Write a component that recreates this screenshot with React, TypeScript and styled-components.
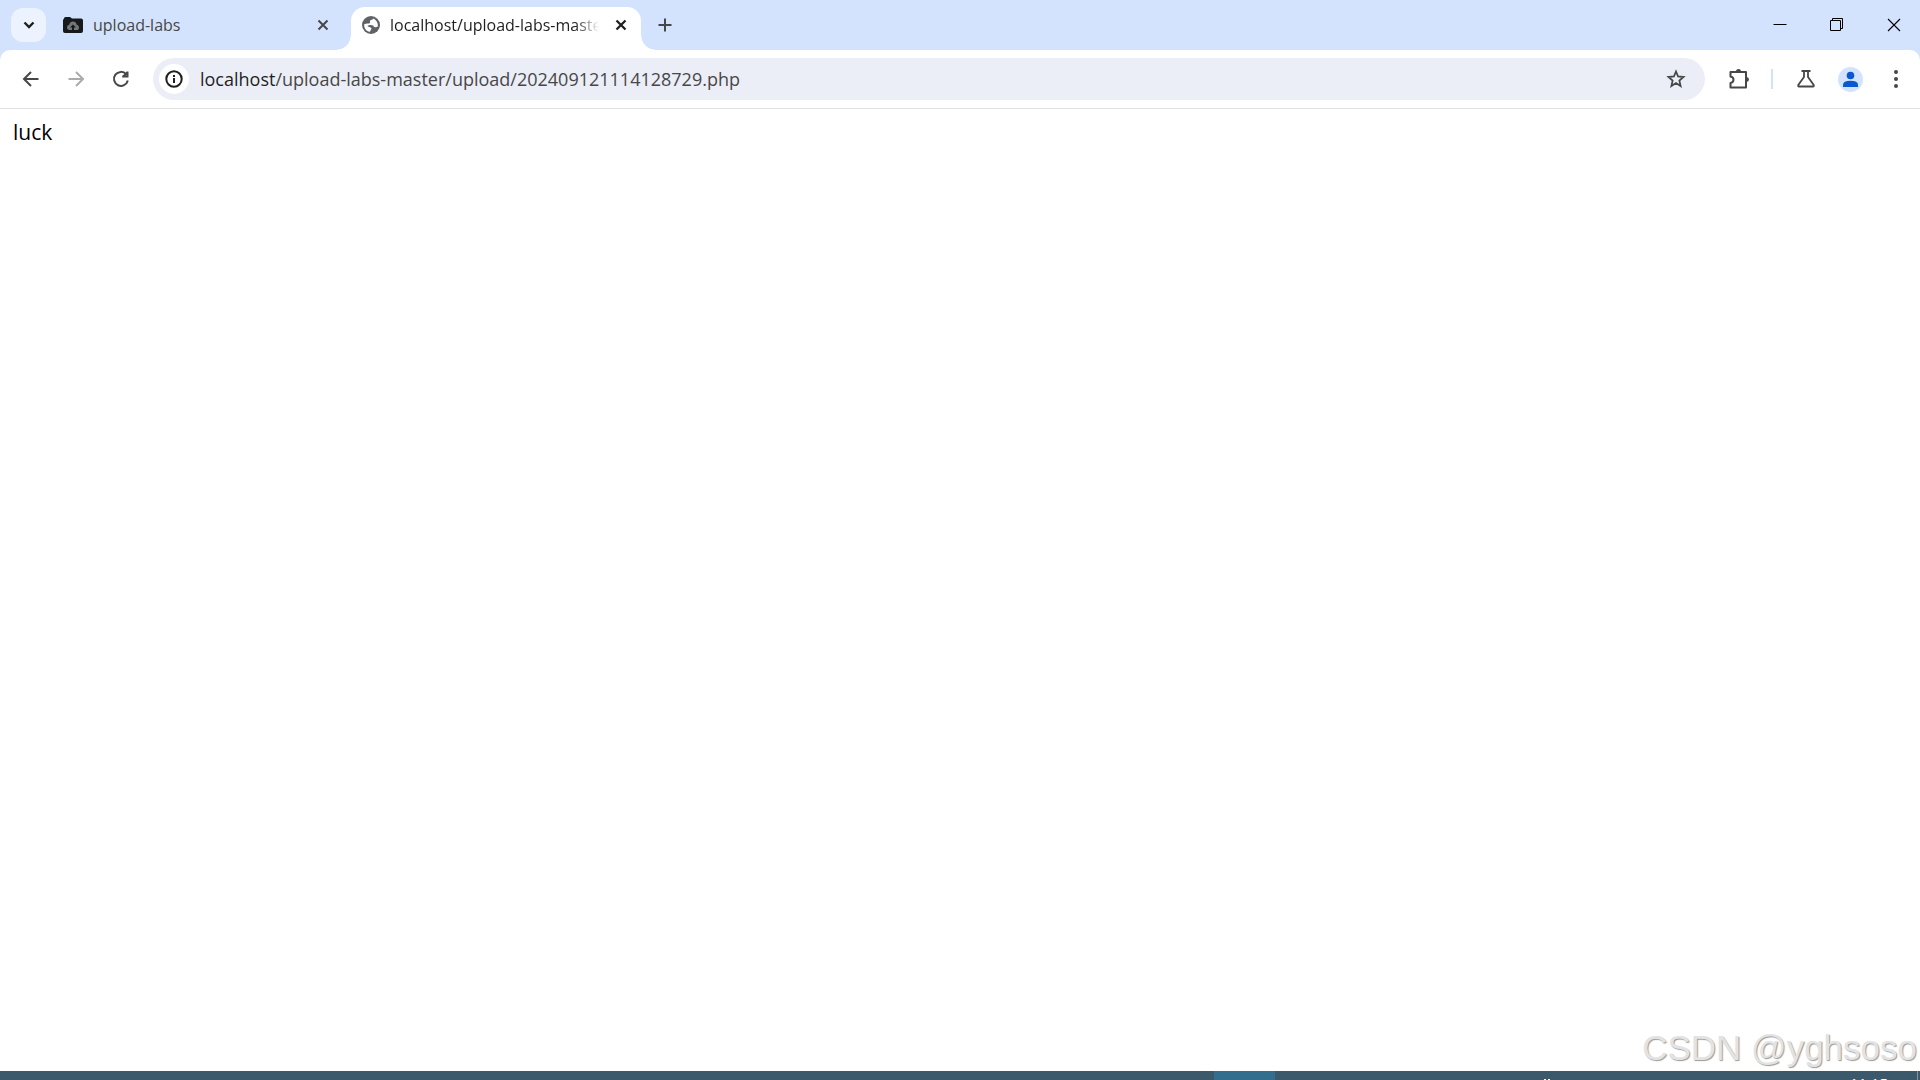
import React from "react";
import styled, { createGlobalStyle } from "styled-components";

const Global = createGlobalStyle`
  * { box-sizing: border-box; }
  body { margin: 0; background: #fff; font-family: "Open Sans", "Noto Sans CJK SC", sans-serif; }
`;

const Desktop = styled.div`
  display: flex;
  flex-direction: column;
  height: 100vh;
  overflow: hidden;
  position: relative;
`;

const TabStrip = styled.header`
  display: flex;
  align-items: stretch;
  height: 50px;
  padding-left: 11px;
  background: #d3e3fd;
`;

const PlainButton = styled.button`
  display: inline-flex;
  align-items: center;
  justify-content: center;
  flex: none;
  border: 0;
  padding: 0;
  margin: 0;
  background: transparent;
  color: #474747;
  svg { display: block; }
`;

const TabSearch = styled(PlainButton)`
  align-self: center;
  width: 35px;
  height: 34px;
  border-radius: 12px;
  background: #ecf3fe;
  color: #1f1f1f;
`;

const TabList = styled.div`
  display: flex;
  align-items: flex-end;
`;

const Tab = styled.div<{ $active?: boolean }>`
  position: relative;
  display: flex;
  align-items: center;
  gap: 10px;
  width: ${(p) => (p.$active ? 290 : 305)}px;
  height: 43px;
  padding: ${(p) => (p.$active ? "0 8px 8px 11px" : "0 16px 8px 17px")};
  border-radius: 14px 14px 0 0;
  background: ${(p) => (p.$active ? "#fff" : "transparent")};
  color: ${(p) => (p.$active ? "#1f1f1f" : "#474747")};
  &::before, &::after {
    content: "";
    display: ${(p) => (p.$active ? "block" : "none")};
    position: absolute;
    bottom: 0;
    width: 14px;
    height: 14px;
  }
  &::before { right: 100%; background: radial-gradient(circle at 0 0, transparent 13px, #fff 14px); }
  &::after { left: 100%; background: radial-gradient(circle at 100% 0, transparent 13px, #fff 14px); }
`;

const TabTitle = styled.span<{ $fade?: boolean }>`
  flex: 1;
  min-width: 0;
  overflow: hidden;
  white-space: nowrap;
  font-size: 16px;
  line-height: 20px;
  mask-image: ${(p) => (p.$fade ? "linear-gradient(to right, #000 calc(100% - 24px), transparent)" : "none")};
`;

const TabClose = styled(PlainButton)`
  width: 24px;
  height: 24px;
  color: inherit;
`;

const NewTab = styled(PlainButton)`
  align-self: center;
  width: 36px;
  height: 36px;
  margin-left: 6px;
`;

const WindowButtons = styled.div`
  display: flex;
  margin-left: auto;
`;

const WindowButton = styled(PlainButton)`
  width: 57px;
  height: 50px;
  padding-left: 4px;
  color: #000;
`;

const ToolbarBack = styled.div`
  flex: none;
  background: #d3e3fd;
`;

const Toolbar = styled.nav`
  display: flex;
  align-items: center;
  height: 59px;
  padding: 0 2px 0 8px;
  border-bottom: 1px solid #dfe0e2;
  border-radius: 10px 10px 0 0;
  background: #fff;
`;

const ToolButton = styled(PlainButton)<{ $dim?: boolean }>`
  width: 45px;
  height: 42px;
  color: ${(p) => (p.$dim ? "#ababab" : "#474747")};
`;

const AddressBar = styled.form`
  display: flex;
  align-items: center;
  flex: 1;
  height: 42px;
  margin: 0 11px 0 10px;
  padding: 0 7px 0 6px;
  border-radius: 21px;
  background: #ebeef7;
`;

const SiteInfo = styled(PlainButton)`
  width: 30px;
  height: 30px;
  border-radius: 50%;
  background: #fff;
  color: #1f1f1f;
`;

const Address = styled.a`
  flex: 1;
  padding-left: 11px;
  color: #474747;
  font-size: 18px;
  line-height: 28px;
  text-decoration: none;
  white-space: nowrap;
`;

const Host = styled.span`
  color: #1f1f1f;
`;

const Divider = styled.span`
  width: 2px;
  height: 20px;
  margin: 0 10px;
  background: #d3e3fd;
`;

const Page = styled.main`
  flex: 1;
  min-height: 0;
  padding: 9px 13px;
  color: #000;
  font-size: 21px;
  line-height: 28px;
`;

const Taskbar = styled.footer`
  display: flex;
  height: 9px;
  overflow: hidden;
  flex: none;
  background: #3c596b;
`;

const ActiveTask = styled.div`
  width: 61px;
  margin-left: 63.25%;
  background: #346e8e;
`;

const Tray = styled.div`
  display: flex;
  align-items: flex-end;
  margin-left: auto;
  svg { display: block; }
`;

const Clock = styled.time`
  height: 9px;
  margin: 0 2px 0 300px;
  padding: 2px 29px 0 0;
  border-right: 1px solid #8495a0;
  color: #fff;
  font-size: 15px;
  line-height: 20px;
`;

const Watermark = styled.div`
  position: absolute;
  right: 3px;
  bottom: 12px;
  color: #e3e3e3;
  font-family: "Liberation Sans", Arial, sans-serif;
  font-size: 35px;
  line-height: 40px;
  text-shadow: 1px 1px 1px #999;
`;

const Stroke = ({ d, size = 20, w = 2 }: { d: string; size?: number; w?: number }) => (
  <svg width={size} height={size} viewBox="0 0 20 20" fill="none" stroke="currentColor" strokeWidth={w} aria-hidden="true">
    <path d={d} />
  </svg>
);

const FolderIcon = () => (
  <svg width="20" height="17" viewBox="0 0 20 17" aria-hidden="true">
    <path d="M1 2.5Q1 1 2.500 1H7L9 2.500H18Q20 2.500 20 4.500V15Q20 17 18 17H2Q0 17 0 15V4Z" fill="#161a1a" />
    <path d="M6.500 14Q4 14 4 11.300Q4 9 6.200 8.700Q7 5.500 10 5.500Q13 5.500 13.700 8.700Q16 9 16 11.400Q16 14 13.500 14Z" fill="#737777" />
    <path d="M10 8.500L13 11.500H11V15H9V11.500H7Z" fill="#161a1a" />
  </svg>
);

const GlobeIcon = () => (
  <svg width="18" height="18" viewBox="0 0 18 18" aria-hidden="true">
    <circle cx="9" cy="9" r="9" fill="#5f6368" />
    <path d="M11.500 2.400C10.800 4 9 3.500 8.200 4.500C7.500 5.500 8.500 6.300 8 7C7 8 4.500 7 2.100 8.200C2 11.500 3.500 14.500 6.500 15.500C8 16 8.500 15.500 8.500 14.500C8.500 13.500 9.500 13.500 9.500 12.500C9.500 11 6.500 11.500 5.500 10C6.500 9 9.500 8.500 11 9.500C12 10.200 11.500 11 13 11.200C14.200 11.400 14.500 10.700 15.900 10.500C16.200 7 14.500 4 11.500 2.400Z" fill="#fff" />
  </svg>
);

export default function App() {
  return (
    <Desktop>
      <Global />
      <TabStrip>
        <TabSearch aria-label="Search tabs"><Stroke d="M5.500 7.500L10 12L14.500 7.500" w={2.4} /></TabSearch>
        <TabList>
          <Tab>
            <FolderIcon />
            <TabTitle>upload-labs</TabTitle>
            <TabClose aria-label="Close upload-labs"><Stroke d="M5.500 5.500L14.500 14.500M14.500 5.500L5.500 14.500" /></TabClose>
          </Tab>
          <Tab $active>
            <GlobeIcon />
            <TabTitle $fade>localhost/upload-labs-master</TabTitle>
            <TabClose aria-label="Close localhost"><Stroke d="M5.500 5.500L14.500 14.500M14.500 5.500L5.500 14.500" w={2.3} /></TabClose>
          </Tab>
        </TabList>
        <NewTab aria-label="New tab"><Stroke d="M10 3.500V16.500M3.500 10H16.500" /></NewTab>
        <WindowButtons>
          <WindowButton aria-label="Minimize"><Stroke d="M3.500 9.500H16.500" w={1} /></WindowButton>
          <WindowButton aria-label="Restore"><Stroke d="M3.500 5.500H13.500V15.500H3.500ZM5.500 5V3.500H15.500V13.500H14" w={1} /></WindowButton>
          <WindowButton aria-label="Close window"><Stroke d="M4 4L16 16M16 4L4 16" w={1.1} /></WindowButton>
        </WindowButtons>
      </TabStrip>
      <ToolbarBack>
        <Toolbar>
          <ToolButton aria-label="Back"><Stroke d="M17.500 10H3.500M10 3L3 10L10 17" /></ToolButton>
          <ToolButton aria-label="Forward" $dim><Stroke d="M2.500 10H16.500M10 3L17 10L10 17" /></ToolButton>
          <ToolButton aria-label="Reload">
            <Stroke d="M15.200 5.200A7 7 0 1 0 16.800 11.500M16.500 2.500V7.500H11.200M16.200 3.500L12.500 7.200" />
          </ToolButton>
          <AddressBar onSubmit={(e) => e.preventDefault()}>
            <SiteInfo type="button" aria-label="Site information">
              <svg width="18" height="18" viewBox="0 0 18 18" fill="none" stroke="currentColor" strokeWidth="2" aria-hidden="true">
                <circle cx="9" cy="9" r="7.700" /><path d="M9 8V13M9 5V7" />
              </svg>
            </SiteInfo>
            <Address href="#">
              <Host>localhost</Host>/upload-labs-master/upload/202409121114128729.php
            </Address>
            <ToolButton type="button" aria-label="Bookmark">
              <Stroke d="M10 2.500L12.100 7.500L17.500 8L13.400 11.600L14.600 17L10 14.100L5.400 17L6.600 11.600L2.500 8L7.900 7.500Z" w={1.8} />
            </ToolButton>
          </AddressBar>
          <ToolButton aria-label="Extensions">
            <svg width="22" height="22" viewBox="0 0 22 22" aria-hidden="true">
              <path d="M2.500 4H18V19.500H2.500V15Q5.500 14.500 5.500 11.800Q5.500 9 2.500 8.500Z" fill="none" stroke="currentColor" strokeWidth="2" strokeLinejoin="round" />
              <path d="M8 3.500A2.500 2.500 0 0 1 13 3.500ZM18.500 9A2.500 2.500 0 0 1 18.500 14Z" fill="currentColor" />
            </svg>
          </ToolButton>
          <Divider />
          <ToolButton aria-label="Labs"><Stroke d="M5.500 2H14.500M8 2.500V8L2.300 16Q1.800 17.500 3 17.500H17Q18.200 17.500 17.700 16L12 8V2.500" w={1.8} /></ToolButton>
          <ToolButton aria-label="Profile">
            <svg width="25" height="25" viewBox="0 0 25 25" aria-hidden="true">
              <circle cx="12.500" cy="12.500" r="12.500" fill="#d3e3fd" />
              <circle cx="12.500" cy="8.500" r="3.800" fill="#0b57d0" />
              <path d="M5 20V18Q5 13.800 12.500 13.800T20 18V20Z" fill="#0b57d0" />
            </svg>
          </ToolButton>
          <ToolButton aria-label="Menu">
            <svg width="20" height="20" viewBox="0 0 20 20" fill="currentColor" aria-hidden="true">
              <circle cx="10" cy="3" r="2" /><circle cx="10" cy="10" r="2" /><circle cx="10" cy="17" r="2" />
            </svg>
          </ToolButton>
        </Toolbar>
      </ToolbarBack>
      <Page>luck</Page>
      <Taskbar>
        <ActiveTask />
        <Tray>
          <svg width="6" height="1" viewBox="0 0 6 1" fill="#fff" aria-hidden="true"><path d="M0 0H2V1H0ZM4 0H6V1H4Z" /></svg>
          <Clock>11:15</Clock>
        </Tray>
      </Taskbar>
      <Watermark>CSDN @yghsoso</Watermark>
    </Desktop>
  );
}
